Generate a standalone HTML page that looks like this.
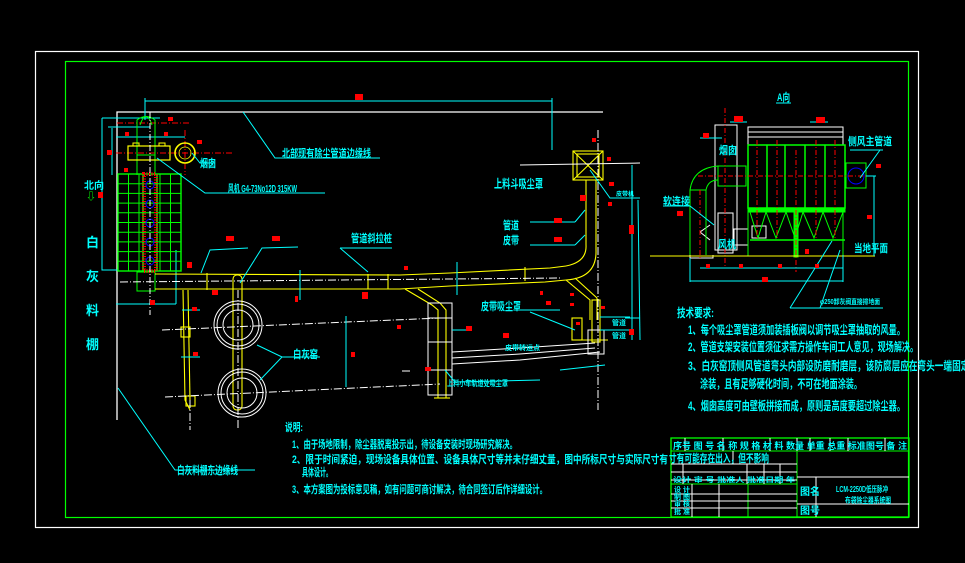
<!DOCTYPE html>
<html><head><meta charset="utf-8"><style>
html,body{margin:0;padding:0;background:#000;}
svg{display:block}
text{font-family:"Liberation Sans","Noto Sans CJK SC",sans-serif;fill:#00ffff;font-weight:bold}
</style></head><body>
<svg width="965" height="563" viewBox="0 0 965 563" xmlns="http://www.w3.org/2000/svg">
<rect width="965" height="563" fill="#000"/>
<rect x="35.5" y="51.5" width="883" height="476" fill="none" stroke="#fff" stroke-width="1.2"/>
<rect x="65.5" y="61.5" width="843" height="456" fill="none" stroke="#00ff00" stroke-width="1.2"/>
<polyline points="117,420 117,112 603,112" fill="none" stroke="#fff" stroke-width="1.3"/>
<line x1="145" y1="101" x2="552" y2="101" stroke="#00ffff"/>
<line x1="145" y1="98" x2="145" y2="120" stroke="#00ffff"/>
<line x1="552" y1="98" x2="552" y2="150" stroke="#00ffff"/>
<rect x="355" y="94" width="8" height="6" fill="#f00"/>
<polyline points="102,118 102,270 118,270" fill="none" stroke="#00ffff"/>
<line x1="102" y1="118" x2="160" y2="118" stroke="#00ffff"/>
<polyline points="112,128 112,175" fill="none" stroke="#00ffff"/>
<line x1="108" y1="127" x2="150" y2="127" stroke="#00ffff"/>
<line x1="116" y1="137" x2="185" y2="137" stroke="#00ffff"/>
<line x1="116" y1="304" x2="176" y2="304" stroke="#00ffff"/>
<line x1="176" y1="250" x2="176" y2="304" stroke="#00ffff"/>
<line x1="116" y1="153" x2="232" y2="153" stroke="#f00" stroke-dasharray="6,2,1,2"/>
<line x1="185" y1="130" x2="185" y2="175" stroke="#f00" stroke-dasharray="6,2,1,2"/>
<line x1="117" y1="123" x2="190" y2="123" stroke="#f00" stroke-dasharray="6,2,1,2"/>
<path d="M137,175 V120 Q146,113 155,120 V175" fill="none" stroke="#00ff00"/>
<path d="M140,125 Q146,108 152,125" fill="none" stroke="#00ff00"/>
<line x1="137" y1="155" x2="155" y2="155" stroke="#00ff00"/>
<rect x="137" y="272" width="18" height="19" fill="none" stroke="#00ff00"/>
<rect x="128" y="146" width="42" height="14" fill="none" stroke="#ff0" stroke-width="1.2"/>
<rect x="133" y="143" width="6" height="3" fill="none" stroke="#ff0"/>
<rect x="159" y="143" width="6" height="3" fill="none" stroke="#ff0"/>
<circle cx="185" cy="153" r="10" fill="none" stroke="#ff0" stroke-width="1.6"/>
<circle cx="185" cy="153" r="6" fill="none" stroke="#ff0" stroke-width=".8"/>
<g stroke="#00ff00" fill="none">
<rect x="118" y="174" width="63" height="97" stroke-width="1.4"/>
<line x1="128.5" y1="174" x2="128.5" y2="271"/><line x1="139" y1="174" x2="139" y2="271"/>
<line x1="143" y1="174" x2="143" y2="271" stroke-width="1.5"/><line x1="157" y1="174" x2="157" y2="271" stroke-width="1.5"/>
<line x1="160" y1="174" x2="160" y2="271"/><line x1="170.5" y1="174" x2="170.5" y2="271"/>
<line x1="118" y1="183.7" x2="181" y2="183.7"/><line x1="118" y1="193.4" x2="181" y2="193.4"/>
<line x1="118" y1="203.1" x2="181" y2="203.1"/><line x1="118" y1="212.8" x2="181" y2="212.8"/>
<line x1="118" y1="222.5" x2="181" y2="222.5"/><line x1="118" y1="232.2" x2="181" y2="232.2"/>
<line x1="118" y1="241.9" x2="181" y2="241.9"/><line x1="118" y1="251.6" x2="181" y2="251.6"/>
<line x1="118" y1="261.3" x2="181" y2="261.3"/>
</g>
<rect x="144" y="174" width="12" height="97" fill="none" stroke="#f00" stroke-dasharray="1,1.5" stroke-width="4"/>
<g stroke="#00f" fill="none"><circle cx="150" cy="185" r="4"/><circle cx="150" cy="204" r="4"/><circle cx="150" cy="223" r="4"/><circle cx="150" cy="242" r="4"/><circle cx="150" cy="261" r="4"/></g>
<line x1="150" y1="112" x2="150" y2="315" stroke="#fff" stroke-dasharray="6,2,1,2"/>
<g stroke="#ff0" fill="none" stroke-width="1.1">
<polyline points="155,274 400,275 450,273 550,268 566,266"/>
<polyline points="155,289 400,289 450,286 545,282 566,280"/>
<line x1="207" y1="273" x2="207" y2="290"/>
<line x1="368" y1="274" x2="368" y2="289"/>
<line x1="388" y1="274" x2="388" y2="289"/>
<line x1="525" y1="267" x2="525" y2="281"/>
<path d="M566,266 Q587,262 586,245 V180"/>
<path d="M566,280 Q597,278 596,250 V180"/>
<rect x="573" y="151" width="30" height="29"/>
<line x1="573" y1="151" x2="603" y2="180"/><line x1="603" y1="151" x2="573" y2="180"/>
<rect x="577" y="154" width="22" height="23"/>
<polyline points="405,289 432,305 438,310 438,398"/>
<polyline points="418,289 440,303 446,310 446,398"/>
<line x1="434" y1="398" x2="450" y2="398"/>
<polyline points="566,280 590,300 590,320"/>
<polyline points="575,278 597,298 597,320"/>
<rect x="592" y="300" width="8" height="42"/>
<rect x="572" y="318" width="10" height="22"/>
<polyline points="572,340 608,340"/>
<rect x="233" y="275" width="9" height="135" rx="4"/>
<polyline points="183,290 185,400 190,410"/>
<polyline points="188,290 190,400"/>
<rect x="181" y="327" width="9" height="10"/>
<rect x="186" y="396" width="9" height="10"/>
</g>
<line x1="120" y1="282" x2="560" y2="278" stroke="#fff" stroke-dasharray="8,2,1,2"/>
<g stroke="#fff" fill="none">
<circle cx="238" cy="325" r="24"/><circle cx="238" cy="325" r="21"/><circle cx="238" cy="325" r="15"/>
<circle cx="242" cy="393" r="24"/><circle cx="242" cy="393" r="21"/><circle cx="242" cy="393" r="15"/>
<line x1="162" y1="330" x2="440" y2="318" stroke-dasharray="8,2,1,2"/>
<line x1="165" y1="397" x2="440" y2="384" stroke-dasharray="8,2,1,2"/>
<line x1="238" y1="290" x2="238" y2="430" stroke-dasharray="8,2,1,2"/>
<line x1="190" y1="400" x2="190" y2="430" stroke-dasharray="8,2,1,2"/>
<rect x="428" y="303" width="24" height="92"/>
<line x1="428" y1="318" x2="452" y2="318"/><line x1="428" y1="342" x2="452" y2="342"/><line x1="428" y1="370" x2="452" y2="370"/>
<polyline points="452,352 520,348 595,343"/><polyline points="452,358 520,354 595,348"/><polyline points="452,364 520,360 600,352"/>
<rect x="588" y="330" width="16" height="24"/>
<line x1="598" y1="130" x2="598" y2="410" stroke-dasharray="8,2,1,2"/>
<line x1="520" y1="165" x2="640" y2="163"/>
<line x1="402" y1="371" x2="410" y2="371"/>
</g>
<g stroke="#00ffff" fill="none">
<polyline points="243,112 275,158 380,158"/>
<polyline points="157,158 205,193 325,193"/>
<polyline points="192,153 200,163 215,163"/>
<polyline points="201,273 210,250 248,248"/>
<polyline points="240,283 262,248 298,247"/>
<polyline points="340,248 368,272"/><line x1="340" y1="248" x2="392" y2="248"/>
<polyline points="257,345 282,357 320,357"/>
<polyline points="260,380 282,357"/>
<polyline points="625,318 640,318"/>
<line x1="632" y1="165" x2="632" y2="340"/>
<line x1="638" y1="200" x2="640" y2="340"/>
<polyline points="590,170 610,198 640,198"/>
<polyline points="575,222 585,210"/><line x1="530" y1="222" x2="575" y2="222"/>
<polyline points="575,245 585,235"/><line x1="530" y1="245" x2="575" y2="245"/>
<line x1="520" y1="310" x2="560" y2="310"/>
<polyline points="530,312 575,330"/>
<polyline points="445,370 455,382 540,380"/>
<line x1="600" y1="317" x2="630" y2="317"/>
<line x1="600" y1="330" x2="630" y2="330"/>
<line x1="560" y1="370" x2="605" y2="365"/>
<line x1="346" y1="316" x2="346" y2="387"/>
<line x1="300" y1="270" x2="300" y2="300"/>
<line x1="457" y1="262" x2="457" y2="295"/>
<polyline points="118,388 175,470 255,470"/>
<line x1="182" y1="310" x2="200" y2="310"/>
<line x1="181" y1="357" x2="200" y2="357"/>
<line x1="452" y1="330" x2="468" y2="330"/>
</g>
<g fill="#f00">
<rect x="168" y="117" width="5" height="4"/><rect x="125" y="132" width="4" height="4"/><rect x="164" y="132" width="4" height="4"/>
<rect x="107" y="150" width="5" height="5"/><rect x="124" y="168" width="4" height="4"/><rect x="98" y="192" width="5" height="6"/>
<rect x="197" y="140" width="5" height="4"/><rect x="187" y="262" width="5" height="6"/><rect x="150" y="300" width="5" height="5"/>
<rect x="226" y="236" width="8" height="5"/><rect x="272" y="236" width="8" height="5"/>
<rect x="212" y="290" width="6" height="5"/><rect x="192" y="307" width="5" height="4"/><rect x="193" y="352" width="5" height="4"/>
<rect x="295" y="296" width="3" height="6"/><rect x="351" y="352" width="4" height="5"/><rect x="362" y="292" width="6" height="7"/>
<rect x="397" y="325" width="4" height="4"/><rect x="404" y="266" width="4" height="4"/><rect x="425" y="367" width="6" height="4"/>
<rect x="466" y="326" width="6" height="5"/><rect x="503" y="333" width="6" height="5"/><rect x="546" y="301" width="5" height="4"/>
<rect x="554" y="218" width="8" height="5"/><rect x="554" y="237" width="8" height="5"/><rect x="580" y="195" width="6" height="6"/>
<rect x="608" y="202" width="4" height="4"/><rect x="607" y="157" width="4" height="4"/><rect x="609" y="182" width="5" height="4"/>
<rect x="592" y="138" width="4" height="4"/><rect x="629" y="225" width="5" height="9"/><rect x="629" y="329" width="5" height="6"/>
<rect x="570" y="303" width="4" height="3"/><rect x="576" y="322" width="4" height="3"/><rect x="601" y="306" width="4" height="3"/>
<rect x="570" y="293" width="4" height="3"/><rect x="540" y="291" width="3" height="4"/>
</g>
<text x="84" y="189" font-size="10">北向</text>
<text x="86" y="200" font-size="10" style="fill:#00ff00">⇩</text>
<text x="86" y="247" font-size="13">白</text>
<text x="86" y="281" font-size="13">灰</text>
<text x="86" y="315" font-size="13">料</text>
<text x="86" y="349" font-size="13">棚</text>
<text x="282" y="157" font-size="11" textLength="89" lengthAdjust="spacingAndGlyphs">北部现有除尘管道边缘线</text>
<text x="228" y="192" font-size="10" textLength="69" lengthAdjust="spacingAndGlyphs">风机 G4-73No12D 315KW</text>
<text x="200" y="167" font-size="11" textLength="16" lengthAdjust="spacingAndGlyphs">烟囱</text>
<text x="351" y="242" font-size="11" textLength="41" lengthAdjust="spacingAndGlyphs">管道斜拉桩</text>
<text x="293" y="358" font-size="11" textLength="25" lengthAdjust="spacingAndGlyphs">白灰窑</text>
<text x="494" y="188" font-size="12" textLength="49" lengthAdjust="spacingAndGlyphs">上料斗吸尘罩</text>
<text x="503" y="229" font-size="11" textLength="16" lengthAdjust="spacingAndGlyphs">管道</text>
<text x="503" y="244" font-size="11" textLength="16" lengthAdjust="spacingAndGlyphs">皮带</text>
<text x="481" y="310" font-size="11" textLength="40" lengthAdjust="spacingAndGlyphs">皮带吸尘罩</text>
<text x="447" y="386" font-size="8" textLength="61" lengthAdjust="spacingAndGlyphs">上料小车轨道处吸尘罩</text>
<text x="505" y="350" font-size="7">皮带转运点</text>
<text x="616" y="196" font-size="6">皮带机</text>
<text x="612" y="325" font-size="7">管道</text>
<text x="612" y="338" font-size="7">管道</text>
<text x="177" y="474" font-size="11" textLength="61" lengthAdjust="spacingAndGlyphs">白灰料棚东边缘线</text>
<text x="285" y="431" font-size="11" textLength="18" lengthAdjust="spacingAndGlyphs">说明:</text>
<text x="292" y="448" font-size="11" textLength="225" lengthAdjust="spacingAndGlyphs">1、由于场地限制，除尘器脱离投示出，待设备安装时现场研究解决。</text>
<text x="292" y="463" font-size="11" textLength="376" lengthAdjust="spacingAndGlyphs">2、限于时间紧迫，现场设备具体位置、设备具体尺寸等并未仔细丈量，图中所标尺寸与实际尺寸有</text>
<text x="302" y="476" font-size="11" textLength="30" lengthAdjust="spacingAndGlyphs">具体设计。</text>
<text x="292" y="493" font-size="11" textLength="255" lengthAdjust="spacingAndGlyphs">3、本方案图为投标意见稿，如有问题可商讨解决，待合同签订后作详细设计。</text>
<text x="777" y="101" font-size="11" textLength="13" lengthAdjust="spacingAndGlyphs">A向</text>
<line x1="776" y1="103" x2="791" y2="103" stroke="#00ffff"/>
<g stroke="#fff" fill="none">
<rect x="715" y="125" width="22" height="125"/>
<rect x="748" y="127" width="95" height="18"/>
<line x1="748" y1="132" x2="843" y2="132"/><line x1="748" y1="137" x2="843" y2="137"/>
<rect x="718" y="213" width="15" height="40"/>
<rect x="734" y="229" width="14" height="16"/>
<rect x="752" y="226" width="14" height="12"/>
<polyline points="690,255 690,258 713,258 713,255"/>
<line x1="700" y1="232" x2="710" y2="225"/><line x1="700" y1="232" x2="710" y2="240"/>
</g>
<g stroke="#00ff00" fill="none">
<rect x="748" y="145" width="97" height="63" stroke-width="1.5"/>
<line x1="767" y1="145" x2="767" y2="208" stroke-width="1.5"/><line x1="785" y1="145" x2="785" y2="208" stroke-width="1.5"/>
<line x1="805" y1="145" x2="805" y2="208" stroke-width="1.5"/><line x1="825" y1="145" x2="825" y2="208" stroke-width="1.5"/>
<rect x="748" y="208" width="97" height="4" fill="#00ff00"/>
<polyline points="750,212 758,238 766,212 776,238 786,212 795,238 803,212 814,238 823,212 833,238 843,212"/>
<rect x="794" y="212" width="4" height="45" fill="#00ff00"/>
<line x1="750" y1="240" x2="845" y2="240" stroke-width="1.5"/>
<line x1="748" y1="212" x2="748" y2="256"/><line x1="843" y1="212" x2="843" y2="256"/>
<rect x="846" y="163" width="20" height="25"/>
<rect x="718" y="166" width="28" height="20"/>
<path d="M690,190 Q693,168 718,166 M706,190 Q708,180 718,180"/>
<line x1="690" y1="190" x2="690" y2="255"/><line x1="706" y1="190" x2="706" y2="255"/>
<line x1="690" y1="190" x2="706" y2="190"/>
</g>
<circle cx="856" cy="176" r="8" fill="none" stroke="#00f"/>
<g stroke="#f00" stroke-dasharray="5,2,1,2">
<line x1="725" y1="108" x2="725" y2="268"/><line x1="757" y1="140" x2="757" y2="240"/><line x1="777" y1="140" x2="777" y2="240"/>
<line x1="796" y1="150" x2="796" y2="272"/><line x1="816" y1="140" x2="816" y2="240"/><line x1="835" y1="140" x2="835" y2="240"/>
<line x1="698" y1="176" x2="870" y2="176"/><line x1="700" y1="190" x2="700" y2="260"/>
</g>
<line x1="650" y1="256" x2="875" y2="256" stroke="#ff0"/>
<g stroke="#00ffff" fill="none">
<line x1="700" y1="268" x2="843" y2="268"/><line x1="690" y1="281" x2="843" y2="281"/>
<line x1="690" y1="258" x2="690" y2="282"/><line x1="843" y1="255" x2="843" y2="282"/>
<line x1="700" y1="138" x2="722" y2="138"/><line x1="730" y1="122" x2="747" y2="122"/><line x1="810" y1="122" x2="828" y2="122"/>
<line x1="874" y1="176" x2="874" y2="256"/><line x1="866" y1="176" x2="876" y2="176"/>
<polyline points="850,150 883,150"/><polyline points="880,150 860,178"/>
<polyline points="663,206 690,206 714,225"/>
<polyline points="790,308 832,241"/><polyline points="790,308 883,308"/><polyline points="820,308 840,250"/>
</g>
<g fill="#f00">
<rect x="734" y="116" width="9" height="6"/><rect x="816" y="117" width="9" height="6"/><rect x="703" y="133" width="6" height="5"/>
<rect x="677" y="211" width="6" height="5"/><rect x="706" y="264" width="4" height="4"/><rect x="739" y="264" width="4" height="4"/>
<rect x="778" y="264" width="4" height="4"/><rect x="815" y="264" width="4" height="4"/><rect x="762" y="277" width="6" height="5"/>
<rect x="867" y="215" width="5" height="4"/><rect x="805" y="249" width="4" height="5"/><rect x="876" y="164" width="5" height="4"/>
</g>
<text x="719" y="154" font-size="11" textLength="18" lengthAdjust="spacingAndGlyphs">烟囱</text>
<text x="848" y="145" font-size="11" textLength="44" lengthAdjust="spacingAndGlyphs">侧风主管道</text>
<text x="663" y="205" font-size="11" textLength="27" lengthAdjust="spacingAndGlyphs">软连接</text>
<text x="718" y="248" font-size="11" textLength="18" lengthAdjust="spacingAndGlyphs">风机</text>
<text x="854" y="252" font-size="11" textLength="34" lengthAdjust="spacingAndGlyphs">当地平面</text>
<text x="820" y="304" font-size="7" textLength="60" lengthAdjust="spacingAndGlyphs">φ250卸灰阀直接排地面</text>
<text x="677" y="317" font-size="12" textLength="37" lengthAdjust="spacingAndGlyphs">技术要求:</text>
<text x="688" y="334" font-size="12" textLength="217" lengthAdjust="spacingAndGlyphs">1、每个吸尘罩管道须加装插板阀以调节吸尘罩抽取的风量。</text>
<text x="688" y="351" font-size="12" textLength="230" lengthAdjust="spacingAndGlyphs">2、管道支架安装位置须征求需方操作车间工人意见，现场解决。</text>
<text x="688" y="370" font-size="12" textLength="290" lengthAdjust="spacingAndGlyphs">3、白灰窑顶侧风管道弯头内部设防磨耐磨层，该防腐层应在弯头一端固定后</text>
<text x="700" y="388" font-size="12" textLength="162" lengthAdjust="spacingAndGlyphs">涂装，且有足够硬化时间，不可在地面涂装。</text>
<text x="688" y="410" font-size="12" textLength="217" lengthAdjust="spacingAndGlyphs">4、烟囱高度可由壁板拼接而成，原则是高度要超过除尘器。</text>
<g stroke="#00ff00" fill="none">
<rect x="671" y="438" width="238" height="79" stroke-width="1.3"/>
<line x1="671" y1="451" x2="909" y2="451"/>
<line x1="797" y1="451" x2="797" y2="517"/>
<line x1="671" y1="484" x2="797" y2="484"/>
<line x1="748" y1="484" x2="748" y2="517"/>
</g>
<g stroke="#fff" fill="none">
<line x1="685" y1="438" x2="685" y2="451"/><line x1="723" y1="438" x2="723" y2="451"/><line x1="770" y1="438" x2="770" y2="451"/>
<line x1="797" y1="438" x2="797" y2="451"/><line x1="810" y1="438" x2="810" y2="451"/><line x1="830" y1="438" x2="830" y2="451"/>
<line x1="848" y1="438" x2="848" y2="451"/><line x1="885" y1="438" x2="885" y2="451"/>
<line x1="733" y1="451" x2="733" y2="464"/>
<line x1="671" y1="464" x2="797" y2="464"/><line x1="671" y1="472" x2="797" y2="472"/><line x1="671" y1="480" x2="797" y2="480"/>
<line x1="683" y1="464" x2="683" y2="484"/><line x1="747" y1="464" x2="747" y2="484"/><line x1="764" y1="464" x2="764" y2="484"/><line x1="780" y1="464" x2="780" y2="484"/>
<line x1="671" y1="494" x2="797" y2="494"/><line x1="671" y1="501" x2="797" y2="501"/><line x1="671" y1="508" x2="797" y2="508"/>
<line x1="692" y1="484" x2="692" y2="517"/><line x1="719" y1="484" x2="719" y2="517"/>
<line x1="797" y1="477" x2="909" y2="477"/><line x1="797" y1="504" x2="909" y2="504"/>
<line x1="816" y1="477" x2="816" y2="517"/>
</g>
<text x="673" y="449" font-size="9" textLength="234" lengthAdjust="spacingAndGlyphs">序号  图  号   名 称 规 格   材 料  数量  单重  总重  标准图号 备 注</text>
<text x="669" y="462" font-size="11" textLength="100" lengthAdjust="spacingAndGlyphs">寸有可能存在出入，但不影响</text>
<text x="673" y="482" font-size="7" textLength="122" lengthAdjust="spacingAndGlyphs">设计  审  号     批准人 批准日期 年</text>
<text x="674" y="492" font-size="7">设 计</text><text x="674" y="499" font-size="7">制 图</text>
<text x="674" y="506" font-size="7">审 核</text><text x="674" y="514" font-size="7">批 准</text>
<text x="800" y="495" font-size="10">图名</text>
<text x="800" y="514" font-size="10">图号</text>
<text x="836" y="492" font-size="8" textLength="52" lengthAdjust="spacingAndGlyphs">LCM-2250D低压脉冲</text>
<text x="845" y="503" font-size="8" textLength="46" lengthAdjust="spacingAndGlyphs">布袋除尘器系统图</text>
</svg>
</body></html>
